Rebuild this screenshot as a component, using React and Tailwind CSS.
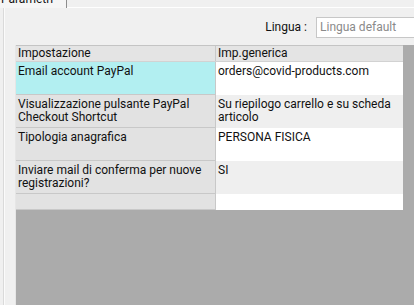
import React from "react";

const rows = [
  { k: "Email account PayPal", v: "orders@covid-products.com", sel: true, h: "h-[33px]", alt: false },
  { k: "Visualizzazione pulsante PayPal Checkout Shortcut", v: "Su riepilogo carrello e su scheda articolo", h: "h-[33px]", alt: true },
  { k: "Tipologia anagrafica", v: "PERSONA FISICA", h: "h-[33px]", alt: false },
  { k: "Inviare mail di conferma per nuove registrazioni?", v: "SI", h: "h-[33px]", alt: true },
  { k: "", v: "", h: "h-[16px]", alt: false },
];

export default function App() {
  return (
    <div
      className="w-[414px] h-[305px] bg-[#f0f0f0] overflow-hidden flex flex-col text-[12px] leading-[13px] text-[#111]"
      style={{ fontFamily: 'Roboto, "Noto Sans", sans-serif' }}
    >
      {/* tab strip */}
      <div className="h-[8px] flex shrink-0">
        <div className="w-[67px] h-[8px] bg-[#f5f5f5] border-r border-[#8d8d8d] overflow-hidden relative">
          <span className="absolute left-[1px] top-[-7px]">Parametri</span>
        </div>
        <div className="flex-1 border-b border-[#fefefe] bg-[#f0f0f0]" />
      </div>
      {/* body */}
      <div className="flex-1 flex ml-[3px] border-l border-[#dadada]">
        <div className="flex-1 flex flex-col border-l border-[#fbfbfb]">
          <div className="h-[9px]" />
          <div className="h-[21px] flex justify-end items-center">
            <span className="mr-[9px]">Lingua :</span>
            <div className="w-[98px] h-[21px] bg-white border border-[#c7c7c7] border-r-0 flex items-center pl-[3px] text-[#8a8a8a] whitespace-nowrap">
              Lingua default
            </div>
          </div>
          <div className="h-[7px]" />
          <div className="flex-1 flex ml-[10px] border-l border-[#e6e6e6]">
            <div className="flex-1 bg-[#ababab] flex flex-col">
              <div className="w-[387px] border-t border-[#c4c4c4]">
                <div className="flex h-[16px] bg-[#e4e4e4] border-b border-[#d2d2d2]">
                  <div className="w-[200px] pl-[2px] pt-[1px] border-r border-[#c8c8c8]">Impostazione</div>
                  <div className="flex-1 pl-[2px] pt-[1px]">Imp.generica</div>
                </div>
                {rows.map((r, i) => (
                  <div key={i} className={"flex " + r.h}>
                    <div
                      className={
                        "w-[200px] pl-[2px] pt-[3px] pr-[8px] border-b border-r border-[#c8c8c8] " +
                        (r.sel ? "bg-[#b2eff1]" : "bg-[#e2e2e2]")
                      }
                    >
                      {r.k}
                    </div>
                    <div
                      className={
                        "flex-1 pl-[2px] pt-[3px] pr-[4px] " + (r.alt ? "bg-[#efefef]" : "bg-white")
                      }
                    >
                      {r.v}
                    </div>
                  </div>
                ))}
              </div>
            </div>
          </div>
        </div>
      </div>
    </div>
  );
}
